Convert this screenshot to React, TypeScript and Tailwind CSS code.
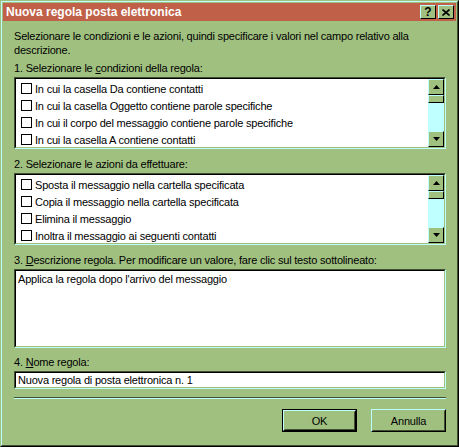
import React from "react";

const BG = "bg-[#a0c080]";

const Check = () => (
  <span className="w-[11px] h-[11px] border border-black bg-white shrink-0" />
);

const ScrollButton = ({ up }: { up?: boolean }) => (
  <div className="h-[16px] w-[16px] border border-t-[#c0ffff] border-l-[#c0ffff] border-b-black border-r-black bg-[#a0c080] flex items-center justify-center shrink-0">
    <svg width="7" height="4" viewBox="0 0 7 4">
      {up ? <path d="M3.5 0 L7 4 L0 4 Z" fill="#000" /> : <path d="M0 0 L7 0 L3.5 4 Z" fill="#000" />}
    </svg>
  </div>
);

const Scrollbar = () => (
  <div className="w-[16px] h-full bg-[#c0ffff] flex flex-col">
    <ScrollButton up />
    <div className="h-[8px] w-[16px] border border-t-[#c0ffff] border-l-[#c0ffff] border-b-black border-r-black bg-[#a0c080]" />
    <div className="flex-1" />
    <ScrollButton />
  </div>
);

const Sunken = ({ className, children }: { className?: string; children: React.ReactNode }) => (
  <div className={`border border-t-[#405030] border-l-[#405030] border-b-[#c0ffff] border-r-[#c0ffff] ${className ?? ""}`}>
    <div className="h-full border border-t-black border-l-black border-b-[#a0c080] border-r-[#a0c080] bg-white flex overflow-hidden">
      {children}
    </div>
  </div>
);

const CheckList = ({ items }: { items: string[] }) => (
  <Sunken className="h-[72px]">
    <div className="flex-1 flex flex-col pl-[5px] pt-[1px]">
      {items.map((t) => (
        <div key={t} className="h-[17px] flex items-center gap-[3px] shrink-0">
          <Check />
          <span>{t}</span>
        </div>
      ))}
    </div>
    <Scrollbar />
  </Sunken>
);

const Button = ({ label, def }: { label: string; def?: boolean }) => (
  <div className={`w-[75px] h-[23px] ${def ? "border border-black" : ""}`}>
    <div className="h-full border border-t-[#c0ffff] border-l-[#c0ffff] border-b-black border-r-black">
      <div className="h-full border border-t-[#a0c080] border-l-[#a0c080] border-b-[#405030] border-r-[#405030] flex items-center justify-center">
        {label}
      </div>
    </div>
  </div>
);

const TitleButton = ({ children }: { children: React.ReactNode }) => (
  <div className="w-[16px] h-[14px] border border-t-[#c0ffff] border-l-[#c0ffff] border-b-black border-r-black bg-[#a0c080] flex items-center justify-center text-black font-bold text-[12px] leading-none">
    {children}
  </div>
);

export default function App() {
  return (
    <div className={`w-[459px] h-[447px] ${BG} font-['Liberation_Sans',Arial,sans-serif] text-[11px] text-black leading-[14px]`}>
      <div className="h-full border border-t-[#a0c080] border-l-[#a0c080] border-b-black border-r-black">
        <div className="h-full border border-t-[#c0ffff] border-l-[#c0ffff] border-b-[#405030] border-r-[#405030] p-[1px] flex flex-col">
          {/* title bar */}
          <div className="h-[18px] bg-[#c06048] flex items-center pl-[3px] pr-[2px] shrink-0">
            <span className="flex-1 text-white font-bold text-[12px]">Nuova regola posta elettronica</span>
            <div className="flex gap-[2px]">
              <TitleButton>?</TitleButton>
              <TitleButton>
                <svg width="8" height="7" viewBox="0 0 8 7">
                  <path d="M0.5 0.5 L7.5 6.5 M7.5 0.5 L0.5 6.5" stroke="#000" strokeWidth="1.6" />
                </svg>
              </TitleButton>
            </div>
          </div>

          <div className="flex-1 flex flex-col pl-[11px] pr-[10px] tracking-[-0.2px]">
            <p className="mt-[8px]">
              Selezionare le condizioni e le azioni, quindi specificare i valori nel campo relativo alla descrizione.
            </p>
            <div className="mt-[4px] mb-[2px]">
              1. Selezionare le <u>c</u>ondizioni della regola:
            </div>
            <CheckList
              items={[
                "In cui la casella Da contiene contatti",
                "In cui la casella Oggetto contiene parole specifiche",
                "In cui il corpo del messaggio contiene parole specifiche",
                "In cui la casella A contiene contatti",
              ]}
            />
            <div className="mt-[8px] mb-[2px]">2. Selezionare le azioni da effettuare:</div>
            <CheckList
              items={[
                "Sposta il messaggio nella cartella specificata",
                "Copia il messaggio nella cartella specificata",
                "Elimina il messaggio",
                "Inoltra il messaggio ai seguenti contatti",
              ]}
            />
            <div className="mt-[8px] mb-[2px]">
              3. <u>D</u>escrizione regola. Per modificare un valore, fare clic sul testo sottolineato:
            </div>
            <Sunken className="h-[79px]">
              <div className="pl-[2px] pt-[1px]">Applica la regola dopo l'arrivo del messaggio</div>
            </Sunken>
            <div className="mt-[7px] mb-[2px]">
              4. <u>N</u>ome regola:
            </div>
            <Sunken className="h-[18px]">
              <div className="pl-[2px] leading-[14px]">Nuova regola di posta elettronica n. 1</div>
            </Sunken>
            <div className="mt-[8px] h-[2px] border-t border-t-[#405030] border-b border-b-[#c0ffff]" />
            <div className="mt-[10px] flex justify-end gap-[14px]">
              <Button label="OK" def />
              <Button label="Annulla" />
            </div>
          </div>
        </div>
      </div>
    </div>
  );
}
